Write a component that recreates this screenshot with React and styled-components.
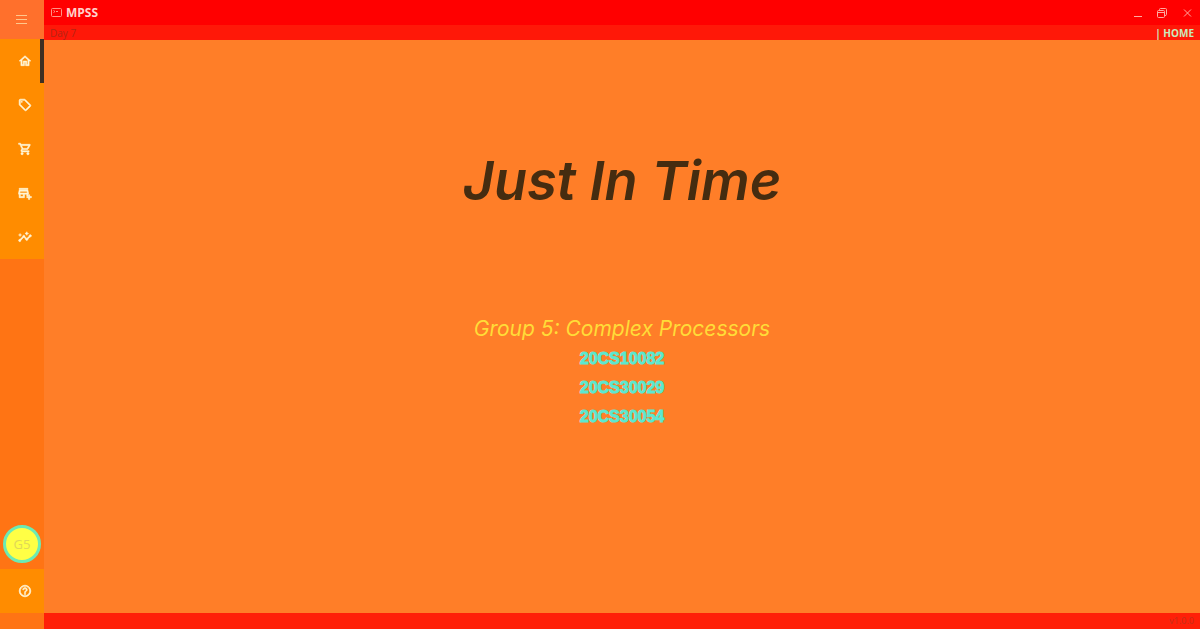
import React from "react";
import styled, { createGlobalStyle } from "styled-components";
import {
  MdOutlineHome,
  MdOutlineLocalOffer,
  MdOutlineShoppingCart,
  MdOutlineAddBusiness,
  MdInsights,
  MdHelpOutline,
} from "react-icons/md";

const GlobalStyle = createGlobalStyle`
  * { box-sizing: border-box; }
  body { margin: 0; font-family: "Open Sans", "Noto Sans", sans-serif; }
  button { border: 0; padding: 0; background: none; font: inherit; color: inherit; cursor: pointer; }
  h1, h2, p, ul { margin: 0; padding: 0; }
`;

const Shell = styled.div`
  display: grid;
  grid-template-columns: 44px 1fr;
  min-height: 100vh;
  background: #ff7e28;
`;

const Sidebar = styled.aside`
  display: flex;
  flex-direction: column;
  background: #ff7414;
`;

const MenuButton = styled.button`
  display: flex;
  align-items: center;
  justify-content: center;
  height: 39px;
  background: #ff702c;
  color: #ffc88c;
`;

const Nav = styled.nav`
  display: flex;
  flex-direction: column;
  background: #ff8c00;
`;

const NavButton = styled.button`
  display: flex;
  align-items: center;
  justify-content: flex-end;
  height: 44px;
  padding-right: 8px;
  border-right: 4px solid ${(p) => (p.$active ? "#3f2f22" : "transparent")};
  color: #fff6d8;
  font-size: 14px;

  path:not([fill="none"]) {
    stroke: currentColor;
    stroke-width: 1px;
  }

  path[fill="none"] {
    stroke: none;
  }
`;

const Avatar = styled.button`
  width: 38px;
  height: 38px;
  margin: auto auto 6px 3px;
  border: 3px solid #6ceab4;
  border-radius: 50%;
  background: #ffff45;
  color: #e0d858;
  font-size: 13px;
`;

const HelpArea = styled.div`
  display: flex;
  flex-direction: column;
  margin-bottom: 16px;
  background: #ff8c00;
`;

const Main = styled.div`
  display: flex;
  flex-direction: column;
  min-width: 0;
`;

const TitleBar = styled.header`
  display: flex;
  align-items: center;
  justify-content: space-between;
  height: 25px;
  padding: 0 8px 0 7px;
  background: #ff0000;
`;

const Brand = styled.div`
  display: flex;
  align-items: center;
  gap: 4px;
  color: #ffd2cc;
  font-size: 12px;
  font-weight: 700;
`;

const WindowControls = styled.div`
  display: flex;
  align-items: center;
  gap: 14px;
  color: #ffaaa0;
`;

const WindowButton = styled.button`
  display: flex;
`;

const StatusBar = styled.div`
  display: flex;
  align-items: center;
  justify-content: space-between;
  height: 15px;
  padding: 0 6px;
  background: #ff1808;
  font-size: 10px;
  line-height: 16px;
`;

const Day = styled.span`
  color: #b42414;
`;

const PageName = styled.span`
  color: #c8e8bc;
  font-weight: 700;
`;

const Content = styled.main`
  display: flex;
  flex: 1;
  flex-direction: column;
  align-items: center;
  padding: 101px 0 0;
  text-align: center;
`;

const Title = styled.h1`
  color: #452c10;
  font-family: "Segoe Print", Inter, sans-serif;
  font-size: 54px;
  font-style: italic;
  font-weight: 600;
  line-height: 80px;
`;

const Group = styled.h2`
  margin-top: 93px;
  color: #ffdc38;
  font-family: "Segoe Print", Inter, sans-serif;
  font-size: 21px;
  font-style: italic;
  font-weight: 400;
  line-height: 30px;
`;

const Members = styled.ul`
  list-style: none;
  color: #5ce8d0;
  font-family: Impact, "Liberation Sans", sans-serif;
  font-size: 16px;
  font-weight: 700;
  line-height: 29px;
  -webkit-text-stroke: 1px #5ce8d0;
`;

const Footer = styled.footer`
  height: 16px;
  padding: 0 6px;
  background: #ff2008;
  color: #c43018;
  font-size: 9px;
  line-height: 16px;
  text-align: right;
`;

const sections = [
  { label: "Home", Icon: MdOutlineHome, active: true },
  { label: "Items", Icon: MdOutlineLocalOffer },
  { label: "Cart", Icon: MdOutlineShoppingCart },
  { label: "Add shop", Icon: MdOutlineAddBusiness },
  { label: "Insights", Icon: MdInsights },
];

const members = ["20CS10082", "20CS30029", "20CS30054"];

export default function App() {
  return (
    <>
      <GlobalStyle />
      <Shell>
        <Sidebar>
          <MenuButton aria-label="Menu">
            <svg width="12" height="12" viewBox="0 0 12 12" stroke="currentColor">
              <path d="M0 1.5H11M0 5.5H11M0 9.5H11" />
            </svg>
          </MenuButton>
          <Nav>
            {sections.map(({ label, Icon, active }) => (
              <NavButton key={label} aria-label={label} $active={active}>
                <Icon />
              </NavButton>
            ))}
          </Nav>
          <Avatar>G5</Avatar>
          <HelpArea>
            <NavButton aria-label="Help">
              <MdHelpOutline />
            </NavButton>
          </HelpArea>
        </Sidebar>
        <Main>
          <TitleBar>
            <Brand>
              <svg width="11" height="10" viewBox="0 0 11 10" fill="none" stroke="#ff9488">
                <rect x="0.5" y="0.5" width="10" height="8" rx="1" />
                <path d="M2.5 2.5L4 3.5L2.5 4.5M5 3.5H7" />
              </svg>
              <span>MPSS</span>
            </Brand>
            <WindowControls>
              <WindowButton aria-label="Minimize">
                <svg width="10" height="10" viewBox="0 0 10 10" stroke="currentColor">
                  <path d="M1 8.5H9" />
                </svg>
              </WindowButton>
              <WindowButton aria-label="Restore">
                <svg width="11" height="10" viewBox="0 0 11 10" fill="none" stroke="currentColor">
                  <rect x="0.5" y="2.5" width="7" height="7" rx="1" />
                  <path d="M2.5 2V1.5Q2.5 0.5 3.5 0.5H8.5Q9.5 0.5 9.5 1.5V6.5Q9.5 7.5 8 7.5M0.5 4.5H7.5" />
                </svg>
              </WindowButton>
              <WindowButton aria-label="Close">
                <svg width="10" height="10" viewBox="0 0 10 10" stroke="currentColor">
                  <path d="M2 1.5L9 8.5M9 1.5L2 8.5" />
                </svg>
              </WindowButton>
            </WindowControls>
          </TitleBar>
          <StatusBar>
            <Day>Day 7</Day>
            <PageName>| HOME</PageName>
          </StatusBar>
          <Content>
            <Title>Just In Time</Title>
            <Group>Group 5: Complex Processors</Group>
            <Members>
              {members.map((id) => (
                <li key={id}>{id}</li>
              ))}
            </Members>
          </Content>
          <Footer>v1.0.0</Footer>
        </Main>
      </Shell>
    </>
  );
}
